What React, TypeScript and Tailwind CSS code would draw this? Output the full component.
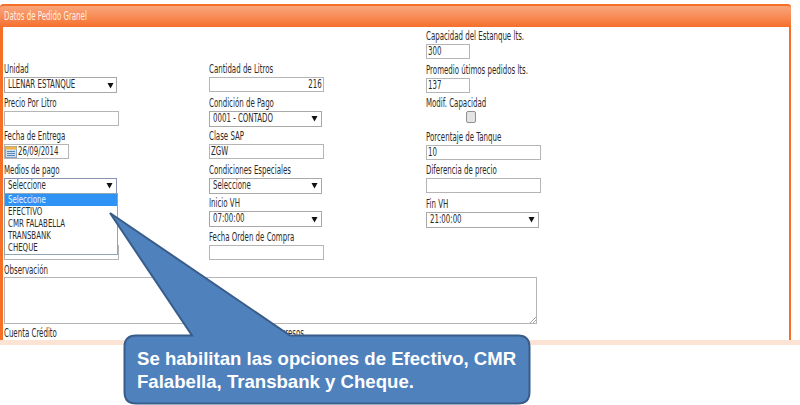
const FONT = "font-['DejaVu_Sans_Condensed','Liberation_Sans',sans-serif]";

// the source text is a narrow Tahoma, no installed family is that narrow
function Txt({ children, right = false }: { children?: React.ReactNode; right?: boolean }) {
  return (
    <span className={`inline-block scale-x-[0.68] whitespace-nowrap ${right ? "origin-right" : "origin-left"}`}>
      {children}
    </span>
  );
}

function Option({ children, active = false }: { children: React.ReactNode; active?: boolean }) {
  return (
    <div className={`h-[12px] pl-[3px] ${active ? "bg-[#2f93f5] text-[#e8f3ff]" : ""}`}>
      <span className="inline-block origin-left scale-x-[0.78] whitespace-nowrap">{children}</span>
    </div>
  );
}

function Field({ label, children }: { label: string; children?: React.ReactNode }) {
  return (
    <div className="h-[33.5px]">
      <div className="h-[17px] pt-[2px] text-[11.5px] leading-[14px] text-[#2b2b2b]">
        <Txt>{label}</Txt>
      </div>
      {children}
    </div>
  );
}

function TextBox({ w, value = "", right = false }: { w: string; value?: string; right?: boolean }) {
  return (
    <div className={`${w} h-[15px] border border-[#b5b5b5] bg-white px-[1px] text-[11.5px] leading-[13px] text-[#2b2b2b] ${right ? "text-right" : ""}`}>
      <Txt right={right}>{value}</Txt>
    </div>
  );
}

function Select({ w, value, focus = false }: { w: string; value: string; focus?: boolean }) {
  return (
    <div className={`${w} flex h-[16px] items-center justify-between border ${focus ? "border-[#8b8fb5]" : "border-[#a8a8a8]"} bg-white pl-[3px] pr-[3px] text-[11.5px] text-[#2b2b2b]`}>
      <Txt>{value}</Txt>
      <svg width="7" height="7" viewBox="0 0 7 7" className="shrink-0">
        <path d="M0.5 1 L6.5 1 L3.5 6.5 Z" fill="#111" />
      </svg>
    </div>
  );
}

export default function App() {
  return (
    <div className={`relative h-[405px] w-[800px] overflow-hidden bg-white ${FONT}`}>
      <div className="pt-[4px]">
        <div className="w-[791px] rounded-t-[4px] border-l-[3px] border-r-[2px] border-[#f56f27]">
          <div className="-ml-[3px] -mr-[2px] flex h-[23px] items-center rounded-t-[4px] border-t-[2px] border-[#f56f27] bg-gradient-to-b from-[#f9a57c] to-[#f56f27] pl-[4px] text-[11.5px] text-[#fff0e6]">
            <Txt>Datos de Pedido Granel</Txt>
          </div>
          <div className="h-[313px] overflow-hidden pl-[1px]">
            <div className="flex">
              <div className="w-[205px] shrink-0 pt-[33px]">
                <Field label="Unidad"><Select w="w-[113px]" value="LLENAR ESTANQUE" /></Field>
                <Field label="Precio Por Litro"><TextBox w="w-[115px]" /></Field>
                <Field label="Fecha de Entrega">
                  <div className="flex h-[15px] w-[65px] items-center border border-[#b5b5b5] bg-white text-[11.5px] text-[#2b2b2b]">
                    <svg width="12" height="12" viewBox="0 0 12 12" className="mr-[1px] shrink-0">
                      <rect x="0.5" y="0.5" width="11" height="11" fill="#cfe0f2" stroke="#8aa4c4" />
                      <rect x="0.5" y="0.5" width="11" height="3" fill="#f2b544" />
                      <path d="M2 5.500h8M2 7.500h8M2 9.500h8" stroke="#5b86b8" />
                    </svg>
                    <Txt>26/09/2014</Txt>
                  </div>
                </Field>
                <Field label="Medios de pago"><Select w="w-[113px]" value="Seleccione" focus /></Field>
                <Field label=""><div /></Field>
                <Field label=""><TextBox w="w-[115px]" /></Field>
              </div>
              <div className="w-[217px] shrink-0 pt-[33px]">
                <Field label="Cantidad de Litros"><TextBox w="w-[115px]" value="216" right /></Field>
                <Field label="Condición de Pago"><Select w="w-[113px]" value="0001 - CONTADO" /></Field>
                <Field label="Clase SAP"><TextBox w="w-[115px]" value="ZGW" /></Field>
                <Field label="Condiciones Especiales"><Select w="w-[113px]" value="Seleccione" /></Field>
                <Field label="Inicio VH"><Select w="w-[113px]" value="07:00:00" /></Field>
                <Field label="Fecha Orden de Compra"><TextBox w="w-[115px]" /></Field>
              </div>
              <div className="flex-1">
                <Field label="Capacidad del Estanque lts."><TextBox w="w-[44px]" value="300" /></Field>
                <Field label="Promedio útimos pedidos lts."><TextBox w="w-[44px]" value="137" /></Field>
                <Field label="Modif. Capacidad">
                  <div className="ml-[40px] h-[12px] w-[10px] rounded-[2px] border border-[#8f8f8f] bg-[#e4e4e4]" />
                </Field>
                <Field label="Porcentaje de Tanque"><TextBox w="w-[115px]" value="10" /></Field>
                <Field label="Diferencia de precio"><TextBox w="w-[115px]" /></Field>
                <Field label="Fin VH"><Select w="w-[113px]" value="21:00:00" /></Field>
              </div>
            </div>
            <div className="h-[16px] pt-[2px] text-[11.5px] leading-[14px] text-[#2b2b2b]"><Txt>Observación</Txt></div>
            <div className="relative h-[47px] w-[533px] border border-[#b5b5b5] bg-white">
              <svg className="absolute bottom-0 right-0" width="7" height="7" viewBox="0 0 7 7">
                <path d="M1 7 L7 1 M4 7 L7 4" stroke="#8a8a8a" strokeWidth="0.8" />
              </svg>
            </div>
            <div className="flex">
              <div className="w-[205px] shrink-0 pt-[2px] text-[11.5px] leading-[14px] text-[#2b2b2b]"><Txt>Cuenta Crédito</Txt></div>
              <div className="pt-[2px] text-[11.5px] leading-[14px] text-[#2b2b2b]"><Txt>Observaciones de Ingresos</Txt></div>
            </div>
          </div>
        </div>
        <div className="h-[5px] bg-[#fde3d4]" />
      </div>

      {/* open dropdown */}
      <div className="absolute left-[4px] top-[193px] w-[114px] border border-[#8fa5b8] bg-white text-[10px] leading-[12px] text-[#2b2b2b]">
        <Option active>Seleccione</Option>
        <Option>EFECTIVO</Option>
        <Option>CMR FALABELLA</Option>
        <Option>TRANSBANK</Option>
        <Option>CHEQUE</Option>
      </div>

      {/* callout */}
      <svg className="absolute left-0 top-0" width="800" height="405" viewBox="0 0 800 405">
        <path
          d="M110 213 L192 335.500 L136 335.500 Q124.500 335.500 124.500 347 L124.500 392 Q124.500 403.500 136 403.500 L518 403.500 Q529.500 403.500 529.500 392 L529.500 347 Q529.500 335.500 518 335.500 L290 335.500 Z"
          fill="#4f81bd"
          stroke="#385d8a"
          strokeWidth="2"
        />
      </svg>
      <div className="absolute left-[137px] top-[347px] font-['Liberation_Sans',sans-serif] text-[18.6px] font-bold leading-[23px] text-white whitespace-nowrap">
        Se habilitan las opciones de Efectivo, CMR
        <br />
        Falabella, Transbank y Cheque.
      </div>
    </div>
  );
}
